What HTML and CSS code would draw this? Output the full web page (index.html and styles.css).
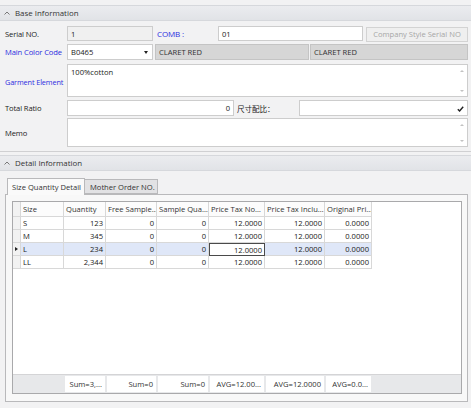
FILE: index.html
```html
<!DOCTYPE html>
<html lang="en">
<head>
    <meta charset="UTF-8">
    <title>Order Detail</title>
    <link rel="stylesheet" href="styles.css">
</head>
<body>
    <div class="group-head first">
        <svg class="chev" width="6" height="4" viewBox="0 0 6 4"><polyline points="0.5,3.5 3,1 5.5,3.5" fill="none" stroke="#777" stroke-width="1"/></svg>
        <span>Base Information</span>
    </div>
    <div class="base-form">
        <div class="row r1">
            <div class="lbl">Serial NO.</div>
            <div class="field readonly w-serial">1</div>
            <div class="lbl blue w-comb">COMB :</div>
            <div class="field w-combin">01</div>
            <div class="btn">Company Style Serial NO</div>
        </div>
        <div class="row r2">
            <div class="lbl blue">Main Color Code</div>
            <div class="field combo w-serial">B0465<span class="arrow"></span></div>
            <div class="field gray w-gray">CLARET RED</div>
            <div class="field gray grow">CLARET RED</div>
        </div>
        <div class="row r3">
            <div class="lbl blue low">Garment Element</div>
            <div class="memo grow">
                <div class="memo-text">100%cotton</div>
                <div class="scroll"><span class="up"></span><span class="down"></span></div>
            </div>
        </div>
        <div class="row r4">
            <div class="lbl">Total Ratio</div>
            <div class="field num w-ratio">0</div>
            <div class="lbl w-cn">尺寸配比：</div>
            <div class="field combo grow">
                <svg class="tick" width="7" height="6" viewBox="0 0 7 6"><polyline points="0.8,3.2 2.6,5 6.2,0.8" fill="none" stroke="#222" stroke-width="1.4"/></svg>
            </div>
        </div>
        <div class="row r5">
            <div class="lbl">Memo</div>
            <div class="memo grow">
                <div class="memo-text"></div>
                <div class="scroll"><span class="up"></span><span class="down"></span></div>
            </div>
        </div>
    </div>
    <div class="sep"></div>
    <div class="group-head">
        <svg class="chev" width="6" height="4" viewBox="0 0 6 4"><polyline points="0.5,3.5 3,1 5.5,3.5" fill="none" stroke="#777" stroke-width="1"/></svg>
        <span>Detail Information</span>
    </div>
    <div class="tabs">
        <div class="tab active">Size Quantity Detail</div>
        <div class="tab">Mother Order NO.</div>
    </div>
    <div class="panel">
        <div class="grid">
            <div class="grow-row head">
                <div class="c ind"></div>
                <div class="c">Size</div>
                <div class="c">Quantity</div>
                <div class="c">Free Sample…</div>
                <div class="c">Sample Qua…</div>
                <div class="c">Price Tax No…</div>
                <div class="c">Price Tax Inclu…</div>
                <div class="c">Original Pri…</div>
                <div class="c last"></div>
            </div>
            <div class="grow-row">
                <div class="c ind"></div>
                <div class="c">S</div>
                <div class="c n">123</div>
                <div class="c n">0</div>
                <div class="c n">0</div>
                <div class="c n">12.0000</div>
                <div class="c n">12.0000</div>
                <div class="c n">0.0000</div>
                <div class="c last"></div>
            </div>
            <div class="grow-row">
                <div class="c ind"></div>
                <div class="c">M</div>
                <div class="c n">345</div>
                <div class="c n">0</div>
                <div class="c n">0</div>
                <div class="c n">12.0000</div>
                <div class="c n">12.0000</div>
                <div class="c n">0.0000</div>
                <div class="c last"></div>
            </div>
            <div class="grow-row current">
                <div class="c ind"><span class="pointer"></span></div>
                <div class="c">L</div>
                <div class="c n">234</div>
                <div class="c n">0</div>
                <div class="c n">0</div>
                <div class="c n focus">12.0000</div>
                <div class="c n">12.0000</div>
                <div class="c n">0.0000</div>
                <div class="c last"></div>
            </div>
            <div class="grow-row">
                <div class="c ind"></div>
                <div class="c">LL</div>
                <div class="c n">2,344</div>
                <div class="c n">0</div>
                <div class="c n">0</div>
                <div class="c n">12.0000</div>
                <div class="c n">12.0000</div>
                <div class="c n">0.0000</div>
                <div class="c last"></div>
            </div>
            <div class="filler"></div>
            <div class="grow-row foot">
                <div></div>
                <div></div>
                <div class="s">Sum=3,...</div>
                <div class="s">Sum=0</div>
                <div class="s">Sum=0</div>
                <div class="s">AVG=12.00...</div>
                <div class="s">AVG=12.0000</div>
                <div class="s">AVG=0.0...</div>
                <div></div>
            </div>
        </div>
    </div>
</body>
</html>
```

FILE: styles.css
```css
* {
    box-sizing: border-box;
}
body {
    margin: 0;
    background: #f2f2f3;
    font-family: "Open Sans", "Noto Sans CJK SC", sans-serif;
    font-size: 7.6px;
    color: #222;
    width: 471px;
    height: 408px;
    overflow: hidden;
}
.group-head {
    height: 16px;
    display: flex;
    align-items: center;
    padding-left: 4px;
    background: linear-gradient(#ebecef, #e1e3e7);
    border-top: 1px solid #d6d8dc;
    border-bottom: 1px solid #d6d8dc;
    color: #333;
    font-size: 7.9px;
}
.group-head.first {
    margin-top: 5px;
}
.chev {
    margin-right: 5px;
}
.base-form {
    padding: 5px 3px 0 5px;
}
.row {
    display: flex;
    align-items: center;
}
.r1 { height: 15px; }
.r2 { height: 16px; margin-top: 3px; }
.r3 { height: 33px; margin-top: 4px; }
.r4 { height: 16px; margin-top: 3px; }
.r5 { height: 29px; margin-top: 2px; }
.lbl {
    width: 62px;
    flex-shrink: 0;
    white-space: nowrap;
    letter-spacing: -0.12px;
}
.lbl.low {
    padding-top: 3px;
    font-size: 7.3px;
}
.blue {
    color: #2c2ce0;
}
.w-comb {
    margin-left: 4px;
    width: 61px;
    font-size: 8px;
}
.w-serial { width: 86px; }
.w-combin { width: 145px; }
.w-gray { width: 154px; margin-left: 2px; }
.w-ratio { width: 167px; }
.w-cn { width: 62px; margin-left: 3px; }
.grow { flex: 1; }
.field {
    height: 100%;
    background: #fff;
    border: 1px solid #cdcdcd;
    display: flex;
    align-items: center;
    padding: 0 3px;
    flex-shrink: 0;
    position: relative;
}
.field.grow {
    flex: 1;
}
.readonly {
    background: #f0f0f0;
}
.gray {
    background: #d6d6d6;
    border-color: #c4c4c4;
    color: #333;
}
.gray.grow {
    margin-left: 1px;
}
.num {
    justify-content: flex-end;
}
.combo .arrow {
    position: absolute;
    right: 4px;
    top: 6px;
    border-top: 3px solid #222;
    border-left: 2px solid transparent;
    border-right: 2px solid transparent;
}
.combo .tick {
    position: absolute;
    right: 3px;
    top: 5px;
}
.btn {
    flex: 1;
    margin-left: 3px;
    height: 15px;
    margin-top: 1px;
    background: #efefef;
    border: 1px solid #d3d3d3;
    color: #a6a6a6;
    display: flex;
    align-items: center;
    justify-content: center;
    white-space: nowrap;
}
.memo {
    height: 100%;
    background: #fff;
    border: 1px solid #cdcdcd;
    display: flex;
}
.memo-text {
    flex: 1;
    padding: 2px 3px;
}
.scroll {
    width: 10px;
    display: flex;
    flex-direction: column;
    justify-content: space-between;
    align-items: center;
    padding: 5px 0 4px;
}
.scroll .up {
    border-bottom: 2px solid #c2c2c2;
    border-left: 2px solid transparent;
    border-right: 2px solid transparent;
}
.scroll .down {
    border-top: 2px solid #c2c2c2;
    border-left: 2px solid transparent;
    border-right: 2px solid transparent;
}
.sep {
    margin-top: 4px;
    height: 4px;
    border-top: 1px solid #d0d0d2;
}
.tabs {
    margin-top: 7px;
    padding-left: 7px;
    display: flex;
    height: 17px;
    position: relative;
    z-index: 1;
}
.tab {
    height: 15px;
    margin-top: 1px;
    width: 73px;
    background: #e2e2e4;
    border: 1px solid #b9b9bb;
    border-left: none;
    display: flex;
    align-items: center;
    padding-left: 5px;
    color: #333;
    white-space: nowrap;
}
.tab.active {
    height: 17px;
    margin-top: 0;
    width: 78px;
    background: #fafafa;
    border-left: 1px solid #b9b9bb;
    border-bottom: none;
    padding-left: 4px;
}
.panel {
    margin: -1px 3px 0 5px;
    height: 208px;
    border: 1px solid #b9b9bb;
    background: #f8f8f8;
    padding: 6px 5px 7px 6px;
}
.grid {
    height: 193px;
    border: 1px solid #a9a9ab;
    background: #fff;
    display: flex;
    flex-direction: column;
    color: #222;
}
.grow-row {
    display: grid;
    grid-template-columns: 8px 43px 42px 51px 52px 56px 60px 47px 1fr;
    height: 13px;
}
.grow-row.head {
    height: 15px;
}
.c {
    border-right: 1px solid #d8d8d8;
    border-bottom: 1px solid #d8d8d8;
    padding: 0 2px;
    display: flex;
    align-items: center;
    white-space: nowrap;
    overflow: hidden;
    color: #222;
}
.head .c {
    background: #fcfcfc;
    color: #333;
}
.c.n {
    justify-content: flex-end;
}
.c.last {
    border: none;
    background: #fff;
}
.head .c.last {
    background: #fff;
}
.c.ind {
    background: #f2f2f2;
    padding: 0;
    justify-content: center;
}
.current .c {
    background: #dfe7f8;
}
.current .c.ind {
    background: #f2f2f2;
}
.current .c.last {
    background: #fff;
}
.current .c.focus {
    background: #fff;
    border: 1px solid #4a4a4a;
}
.pointer {
    border-left: 3px solid #222;
    border-top: 2px solid transparent;
    border-bottom: 2px solid transparent;
}
.filler {
    flex: 1;
}
.grow-row.foot {
    height: 19px;
    background: #e7e8ea;
    border-top: 1px solid #d4d4d6;
    padding: 1px 0;
}
.foot .s {
    background: #fff;
    margin: 0 1px;
    display: flex;
    align-items: center;
    justify-content: flex-end;
    padding-right: 3px;
    white-space: nowrap;
    overflow: hidden;
    color: #333;
}
```
